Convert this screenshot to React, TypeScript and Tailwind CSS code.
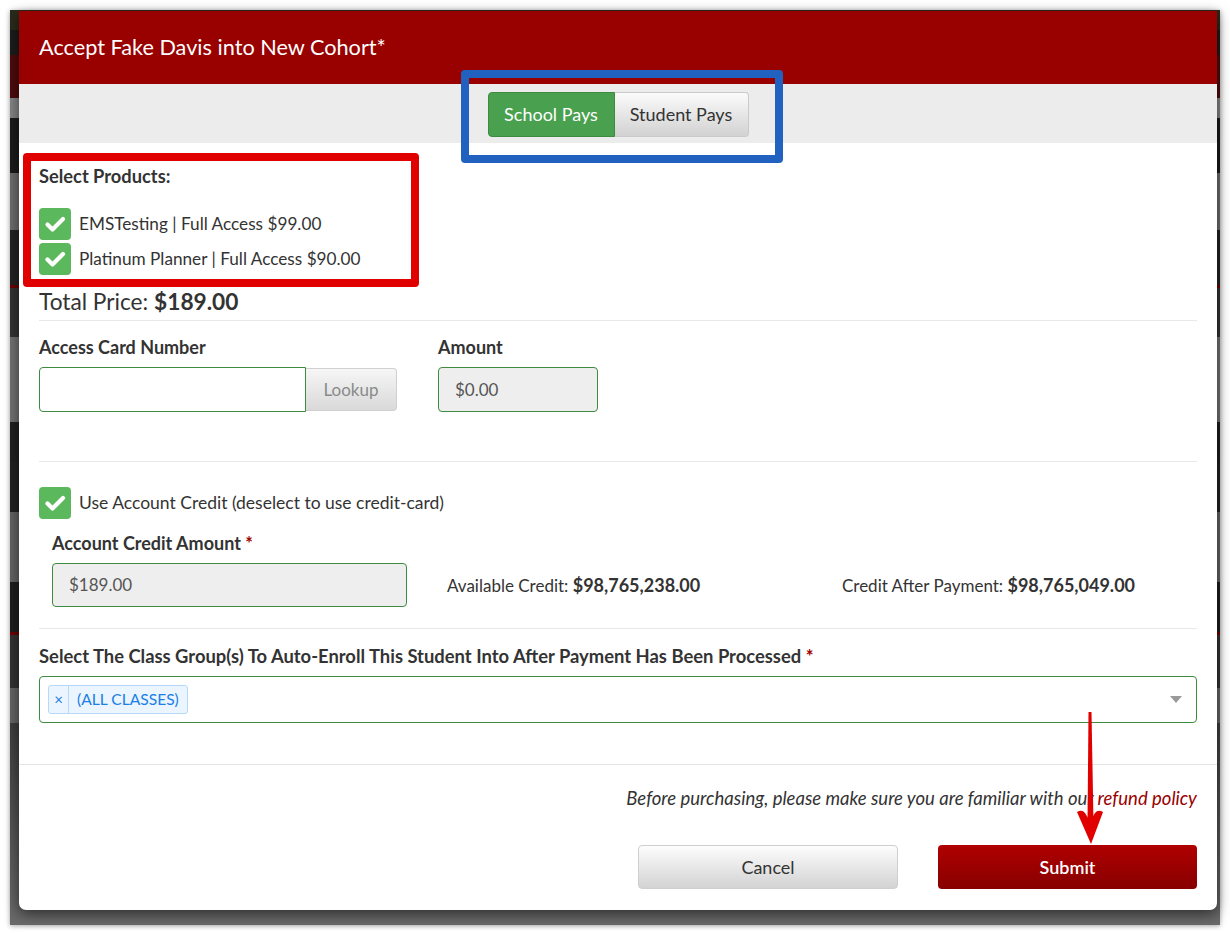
import React from "react";

function Check({ className = "" }: { className?: string }) {
  return (
    <div className={"w-[32px] h-[32px] rounded-[4px] bg-[#5cb85c] flex items-center justify-center shrink-0 " + className}>
      <svg width="32" height="32" viewBox="0 0 32 32">
        <path d="M8.5 16.5 L13.5 21.5 L24 11" fill="none" stroke="white" strokeWidth="4.2" strokeLinecap="round" strokeLinejoin="round" />
      </svg>
    </div>
  );
}

function Backdrop() {
  const bands: [number, string][] = [
    [20, "bg-[#2a2a1c]"],
    [25, "bg-[#1c1c1c]"],
    [43, "bg-[#4e0b0b]"],
    [20, "bg-[#858585]"],
    [55, "bg-[#1b1b1b]"],
    [57, "bg-[#6d6d6d]"],
    [55, "bg-[#232323]"],
    [3, "bg-[#6b0000]"],
    [49, "bg-[#333333]"],
    [85, "bg-[#727272]"],
    [40, "bg-[#202020]"],
    [50, "bg-[#222222]"],
    [70, "bg-[#646464]"],
    [50, "bg-[#1e1e1e]"],
    [3, "bg-[#6b0000]"],
    [53, "bg-[#333333]"],
    [35, "bg-[#666666]"],
  ];
  return (
    <div className="absolute inset-0 flex flex-col overflow-hidden">
      {bands.map(([h, c], i) => (
        <div key={i} className={c + " shrink-0"} style={{ height: h }} />
      ))}
      <div className="flex-1 bg-gradient-to-b from-[#3e3e3e] to-[#6a6a6a] flex overflow-hidden">
        <span className="ml-[350px] mt-[6px] text-[17px] leading-[20px] text-[#6a0000]">(payment)</span>
        <span className="ml-[113px] mt-[6px] text-[17px] leading-[20px] text-[#6a0000]">(payment)</span>
      </div>
    </div>
  );
}

function Modal() {
  return (
    <div className="w-[1198px] h-[899px] bg-white rounded-b-[7px] overflow-hidden shadow-[0_4px_14px_rgba(0,0,0,0.55)] flex flex-col text-[#333]">
      <div className="h-[73px] bg-[#990000] px-[20px] flex items-center shrink-0">
        <span className="text-white text-[21.7px] leading-none">Accept Fake Davis into New Cohort*</span>
      </div>
      <div className="h-[59px] bg-[#ececec] flex justify-center pt-[8px] shrink-0">
        <div className="flex h-[45px]">
          <div className="w-[127px] h-full rounded-l-[4px] bg-[#49a04e] border border-[#3d8a42] text-white text-[18px] flex items-center justify-center">School Pays</div>
          <div className="w-[134px] h-full rounded-r-[4px] bg-gradient-to-b from-[#fbfbfb] to-[#d2d2d2] border border-[#cacaca] border-l-0 text-[#333] text-[18px] flex items-center justify-center">Student Pays</div>
        </div>
      </div>
      <div className="px-[20px] shrink-0">
        <div className="pt-[22px] text-[18.3px] leading-[22px] font-bold">Select Products:</div>
        <div className="mt-[21px] flex flex-col gap-[3px]">
          <div className="flex items-center gap-[8px]">
            <Check />
            <span className="text-[17.2px]">EMSTesting | Full Access $99.00</span>
          </div>
          <div className="flex items-center gap-[8px]">
            <Check />
            <span className="text-[17.2px]">Platinum Planner | Full Access $90.00</span>
          </div>
        </div>
        <div className="mt-[12px] text-[22.7px] leading-[30px]">
          Total Price: <span className="font-bold">$189.00</span>
        </div>
        <div className="mt-[3px] h-px bg-[#e8e8e8]" />
        <div className="mt-[15px] flex">
          <div className="w-[399px]">
            <div className="text-[18px] leading-[22px] font-bold">Access Card Number</div>
            <div className="mt-[9px] flex">
              <div className="w-[267px] h-[45px] border border-[#3e8a3e] rounded-l-[4px] bg-white" />
              <div className="w-[91px] h-[43px] mt-[1px] rounded-r-[4px] bg-gradient-to-b from-[#f6f6f6] to-[#d9d9d9] border border-[#d0d0d0] border-l-0 text-[#8a8a8a] text-[17px] flex items-center justify-center">Lookup</div>
            </div>
          </div>
          <div>
            <div className="text-[18px] leading-[22px] font-bold">Amount</div>
            <div className="mt-[9px] w-[160px] h-[45px] border border-[#3e8a3e] rounded-[4px] bg-[#eeeeee] text-[17px] text-[#555] flex items-center pl-[16px]">$0.00</div>
          </div>
        </div>
        <div className="mt-[49px] h-px bg-[#e8e8e8]" />
        <div className="mt-[25px] flex items-center gap-[8px]">
          <Check />
          <span className="text-[17.5px]">Use Account Credit (deselect to use credit-card)</span>
        </div>
        <div className="pl-[13px]">
          <div className="mt-[13px] text-[18px] leading-[22px] font-bold">
            Account Credit Amount <span className="text-[#a00000]">*</span>
          </div>
          <div className="mt-[9px] flex items-center">
            <div className="w-[395px] shrink-0">
              <div className="w-[355px] h-[44px] border border-[#3e8a3e] rounded-[4px] bg-[#eeeeee] text-[17px] text-[#555] flex items-center pl-[16px]">$189.00</div>
            </div>
            <div className="w-[395px] shrink-0 text-[17px]">
              Available Credit: <span className="font-bold text-[18px]">$98,765,238.00</span>
            </div>
            <div className="text-[17px]">
              Credit After Payment: <span className="font-bold text-[18px]">$98,765,049.00</span>
            </div>
          </div>
        </div>
        <div className="mt-[21px] h-px bg-[#e8e8e8]" />
        <div className="mt-[16px] text-[18.4px] leading-[22px] font-bold">
          Select The Class Group(s) To Auto-Enroll This Student Into After Payment Has Been Processed <span className="text-[#a00000]">*</span>
        </div>
        <div className="mt-[9px] h-[47px] border border-[#3e8a3e] rounded-[4px] flex items-center pl-[8px] pr-[14px]">
          <div className="h-[29px] flex items-stretch border border-[#b7d8fa] bg-[#ebf5ff] rounded-[3px] text-[#1b7fe3]">
            <div className="w-[20px] flex items-center justify-center border-r border-[#b7d8fa] text-[15px]">×</div>
            <div className="px-[8px] flex items-center text-[15.6px]">(ALL CLASSES)</div>
          </div>
          <div className="flex-1" />
          <div className="w-0 h-0 border-l-[6px] border-r-[6px] border-t-[7px] border-l-transparent border-r-transparent border-t-[#9a9a9a]" />
        </div>
      </div>
      <div className="mt-[41px] h-px bg-[#e5e5e5] shrink-0" />
      <div className="px-[20px] shrink-0">
        <div className="pt-[22px] text-right italic text-[18.5px] leading-[22px]">
          Before purchasing, please make sure you are familiar with our <span className="text-[#990000]">refund policy</span>
        </div>
        <div className="mt-[36px] flex justify-end gap-[40px]">
          <div className="w-[260px] h-[44px] rounded-[4px] border border-[#cfcfcf] bg-gradient-to-b from-[#fdfdfd] to-[#d3d3d3] text-[18px] text-[#333] flex items-center justify-center">Cancel</div>
          <div className="w-[259px] h-[44px] rounded-[4px] bg-gradient-to-b from-[#b00000] to-[#870000] text-[18px] text-white font-semibold flex items-center justify-center">Submit</div>
        </div>
      </div>
    </div>
  );
}

export default function App() {
  return (
    <div className="w-[1230px] h-[934px] bg-white pt-[10px] pl-[10px] font-['Lato',sans-serif] overflow-hidden">
      <div className="relative w-[1210px] h-[915px] shadow-[0_1px_5px_rgba(0,0,0,0.35)]">
        <Backdrop />
        <div className="relative pl-[9px] pt-[1px]">
          <Modal />
        </div>
        {/* annotations */}
        <div className="absolute left-[451px] top-[60px] w-[322px] h-[93px] border-[8px] border-[#2162c1] rounded-[4px]" />
        <div className="absolute left-[13px] top-[143px] w-[396px] h-[134px] border-[8px] border-[#e00000] rounded-[4px]" />
        <svg className="absolute left-[1060px] top-[695px]" width="50" height="150" viewBox="0 0 50 150">
          <path d="M18.5 7 L21.5 7 L23.5 118 L17.5 118 Z" fill="#e00000" />
          <path d="M7 107 Q12 104 15 108 L20 116 L25 108 Q28 104 33 107 L21 139 Z" fill="#e00000" />
        </svg>
      </div>
    </div>
  );
}
